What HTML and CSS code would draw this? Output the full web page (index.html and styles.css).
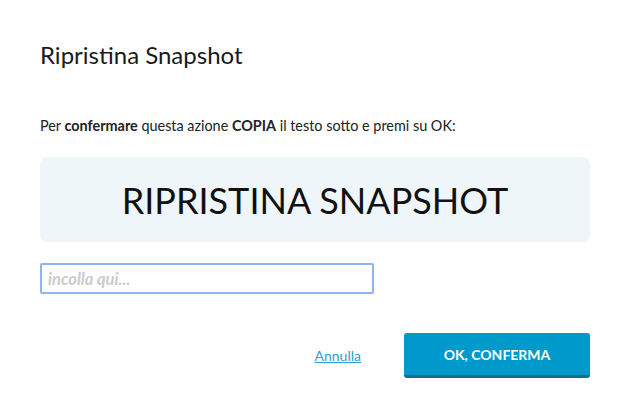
FILE: index.html
```html
<!DOCTYPE html>
<html lang="it">
<head>
<meta charset="utf-8">
<link rel="stylesheet" href="styles.css">
</head>
<body>
<div class="dialog">
  <h1 class="title">Ripristina Snapshot</h1>
  <p class="info">Per <b>confermare</b> questa azione <b>COPIA</b> il testo sotto e premi su OK:</p>
  <div class="phrase">RIPRISTINA SNAPSHOT</div>
  <input class="paste" type="text" placeholder="incolla qui...">
  <div class="actions">
    <a class="cancel" href="#">Annulla</a>
    <button class="confirm" type="button">OK, CONFERMA</button>
  </div>
</div>
</body>
</html>
```
FILE: styles.css
```css
html, body {
  margin: 0;
  padding: 0;
  background: #fff;
}
body {
  font-family: Lato, "Open Sans", sans-serif;
  color: #222;
}
.dialog {
  width: 550px;
  padding: 40px 40px 0 40px;
  display: flex;
  flex-direction: column;
}
.title {
  margin: 0;
  font-size: 24px;
  font-weight: 400;
  line-height: 30px;
  color: #1a1a1a;
}
.info {
  margin: 47px 0 0 0;
  font-size: 14.4px;
  line-height: 18px;
  color: #222;
}
.info b {
  font-weight: 700;
}
.phrase {
  margin-top: 22px;
  height: 85px;
  background: #eff6f9;
  border-radius: 7px;
  display: flex;
  align-items: center;
  justify-content: center;
  font-size: 36px;
  color: #111;
  letter-spacing: 0;
}
.paste {
  margin-top: 21px;
  width: 334px;
  height: 31px;
  box-sizing: border-box;
  border: 2px solid #8fb4f2;
  border-radius: 2px;
  padding: 0 6px;
  font-family: Lato, sans-serif;
  font-size: 16.5px;
  outline: none;
}
.paste::placeholder {
  color: #cbcbcb;
  font-style: italic;
  font-weight: 700;
}
.actions {
  margin-top: 39px;
  display: flex;
  justify-content: flex-end;
  align-items: center;
  gap: 43px;
}
.cancel {
  color: #2a9fd6;
  font-size: 14px;
  text-decoration: underline;
}
.confirm {
  width: 186px;
  height: 45px;
  border: none;
  border-bottom: 3px solid #0a6f94;
  border-radius: 3px;
  background: #0099cc;
  color: #fff;
  font-family: Lato, sans-serif;
  font-weight: 700;
  font-size: 14px;
  cursor: pointer;
}
```
